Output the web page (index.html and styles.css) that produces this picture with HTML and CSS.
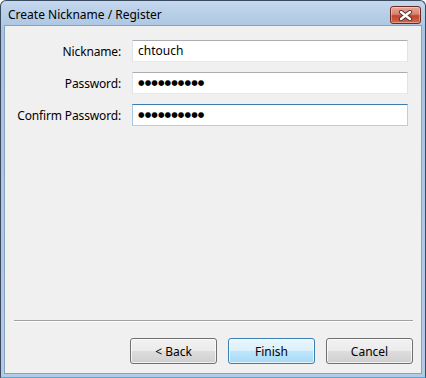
FILE: index.html
```html
<!DOCTYPE html>
<html>
<head>
<meta charset="utf-8">
<link rel="stylesheet" href="styles.css">
</head>
<body>
<div class="window">
  <div class="titlebar">
    <span class="title">Create Nickname / Register</span>
    <div class="close">
      <svg width="17" height="11" viewBox="0 0 17 11">
        <path d="M4 2 L13 9 M13 2 L4 9" stroke="#5a2c26" stroke-width="4.2" stroke-linecap="round"/>
        <path d="M4 2 L13 9 M13 2 L4 9" stroke="#ffffff" stroke-width="2.4" stroke-linecap="round"/>
      </svg>
    </div>
  </div>
  <div class="client">
    <div class="form">
      <label class="lbl">Nickname:</label>
      <div class="field">chtouch</div>
      <label class="lbl">Password:</label>
      <div class="field dots">●●●●●●●●●●</div>
      <label class="lbl">Confirm Password:</label>
      <div class="field dots focus">●●●●●●●●●●</div>
    </div>
    <div class="spacer"></div>
    <div class="sep"></div>
    <div class="buttons">
      <button class="btn">&lt; Back</button>
      <button class="btn default">Finish</button>
      <button class="btn">Cancel</button>
    </div>
  </div>
</div>
</body>
</html>
```

FILE: styles.css
```css
html, body {
  margin: 0;
  padding: 0;
  width: 426px;
  height: 378px;
  overflow: hidden;
  background: #ffffff;
  font-family: "Noto Sans", "Open Sans", sans-serif;
  font-size: 12px;
  color: #000;
}

.window {
  box-sizing: border-box;
  width: 426px;
  height: 378px;
  border: 1px solid #3a4a5e;
  border-bottom-color: #2fb5e0;
  border-radius: 6px 6px 0 0;
  background: linear-gradient(#c4d8ee, #a9c3e0 30px, #b3cbe5);
  display: flex;
  flex-direction: column;
  padding: 0 3px 3px 3px;
}

.titlebar {
  height: 24px;
  display: flex;
  align-items: center;
  justify-content: space-between;
  padding-left: 4px;
}

.title {
  color: #000;
  font-size: 12px;
  margin-top: 3px;
}

.close {
  box-sizing: border-box;
  width: 31px;
  height: 18px;
  margin-top: 4px;
  margin-right: 1px;
  border: 1px solid #6b2a22;
  border-radius: 3px;
  background: linear-gradient(#e9a999, #d7826f 45%, #c3432f 55%, #cf6a50);
  display: flex;
  align-items: center;
  justify-content: center;
  box-shadow: inset 0 0 0 1px rgba(255,255,255,0.35);
}

.client {
  flex: 1;
  background: #f0f0f0;
  border: 1px solid #8aa2bd;
  display: flex;
  flex-direction: column;
  padding-top: 14px;
}

.form {
  display: grid;
  grid-template-columns: 116px 276px;
  grid-auto-rows: 22px;
  column-gap: 11px;
  row-gap: 10px;
}

.lbl {
  text-align: right;
  align-self: center;
  color: #000;
  white-space: nowrap;
  letter-spacing: -0.15px;
}

.field {
  box-sizing: border-box;
  height: 22px;
  background: #fff;
  border: 1px solid #e2e3ea;
  border-top-color: #abadb3;
  border-bottom-color: #e3e9ef;
  padding: 0 5px;
  line-height: 20px;
  white-space: nowrap;
  overflow: hidden;
}

.dots {
  font-family: "DejaVu Sans", sans-serif;
  font-size: 7.5px;
  letter-spacing: 0.1px;
  line-height: 20px;
}

.focus {
  border-color: #b5cfe7;
  border-top-color: #3d7bad;
  border-left-color: #a4c9e3;
}

.spacer {
  flex: 1;
}

.sep {
  height: 1px;
  background: #a0a0a0;
  border-bottom: 1px solid #ffffff;
  margin: 0 8px 0 9px;
}

.buttons {
  display: flex;
  justify-content: flex-end;
  gap: 11px;
  padding: 16px 8px 9px 0;
}

.btn {
  box-sizing: border-box;
  width: 87px;
  height: 26px;
  border: 1px solid #707070;
  border-radius: 3px;
  background: linear-gradient(#f2f2f2, #ebebeb 50%, #dddddd 50%, #cfcfcf);
  box-shadow: inset 0 0 0 1px rgba(255,255,255,0.7);
  font-family: "Noto Sans", "Open Sans", sans-serif;
  font-size: 12px;
  color: #000;
  padding: 0;
}

.btn.default {
  border-color: #3c7fb1;
  background: linear-gradient(#eaf6fd, #d9f0fc 50%, #bee6fd 50%, #a7d9f5);
}
```
